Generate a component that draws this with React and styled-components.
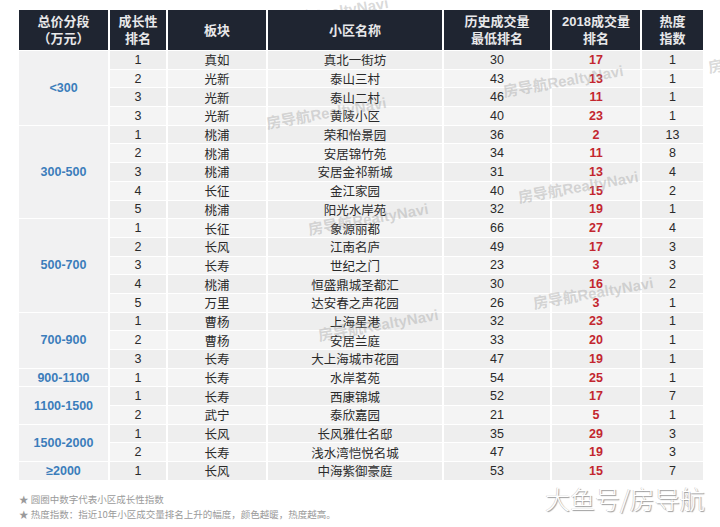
import React from 'react'
import styled, { createGlobalStyle } from 'styled-components'

const Global = createGlobalStyle`
  body {
    margin: 0;
    background: #fff;
    font-family: "Liberation Sans", "Noto Sans CJK SC", sans-serif;
  }
`

const Page = styled.div`
  position: relative;
  width: 720px;
  height: 527px;
  overflow: hidden;
  padding: 10px 0 0 19px;
  box-sizing: border-box;
`

const Grid = styled.div`
  display: grid;
  grid-template-columns: 89px 56px 98px 174px 106px 88px 61px;
  grid-template-rows: 40px;
  grid-auto-rows: 17.7px;
  column-gap: 2px;
  row-gap: 1px;
`

const Head = styled.div`
  position: relative;
  z-index: 2;
  background: #1f2531;
  color: #e8e8ea;
  font-weight: bold;
  font-size: 13px;
  line-height: 17px;
  display: flex;
  align-items: center;
  justify-content: center;
  text-align: center;
`

const Cell = styled.div`
  background: ${p => (p.$alt ? '#f4f4f4' : '#eeeeee')};
  font-size: 12.5px;
  display: flex;
  align-items: center;
  justify-content: center;
  color: ${p => (p.$hot ? '#c3262f' : '#2a2a2a')};
  font-weight: ${p => (p.$hot ? 'bold' : 'normal')};
`

const Group = styled.div`
  grid-row: span ${p => p.$span};
  background: #f1f1f2;
  color: #3b7dbb;
  font-weight: bold;
  font-size: 12.5px;
  display: flex;
  align-items: center;
  justify-content: center;
`

const Notes = styled.div`
  margin-top: 14px;
  display: flex;
  flex-direction: column;
  gap: 4px;
  color: #9a9a9a;
  font-size: 9.5px;
  line-height: 11px;
  font-family: "Noto Sans CJK SC", sans-serif;
`

const Mark = styled.div`
  position: absolute;
  z-index: 1;
  left: ${p => p.$x}px;
  top: ${p => p.$y}px;
  transform: rotate(-10deg);
  transform-origin: left center;
  color: rgba(150, 150, 150, 0.36);
  font-weight: bold;
  font-size: 15px;
  white-space: nowrap;
  pointer-events: none;
`

const Brand = styled.div`
  position: absolute;
  z-index: 3;
  left: 545px;
  top: 480px;
  font-family: "Noto Sans CJK SC", sans-serif;
  font-weight: 300;
  font-size: 25px;
  white-space: nowrap;
  color: #fff;
  text-shadow: 1px 1px 1px #9a9a9a, -0.5px -0.5px 0 #c8c8c8;
`

const groups = [
  { label: '<300', rows: [
    [1, '真如', '真北一街坊', 30, 17, 1],
    [2, '光新', '泰山三村', 43, 13, 1],
    [3, '光新', '泰山二村', 46, 11, 1],
    [3, '光新', '黄陵小区', 40, 23, 1],
  ] },
  { label: '300-500', rows: [
    [1, '桃浦', '荣和怡景园', 36, 2, 13],
    [2, '桃浦', '安居锦竹苑', 34, 11, 8],
    [3, '桃浦', '安居金祁新城', 31, 13, 4],
    [4, '长征', '金江家园', 40, 15, 2],
    [5, '桃浦', '阳光水岸苑', 32, 19, 1],
  ] },
  { label: '500-700', rows: [
    [1, '长征', '象源丽都', 66, 27, 4],
    [2, '长风', '江南名庐', 49, 17, 3],
    [3, '长寿', '世纪之门', 23, 3, 3],
    [4, '桃浦', '恒盛鼎城圣都汇', 30, 16, 2],
    [5, '万里', '达安春之声花园', 26, 3, 1],
  ] },
  { label: '700-900', rows: [
    [1, '曹杨', '上海星港', 32, 23, 1],
    [2, '曹杨', '安居兰庭', 33, 20, 1],
    [3, '长寿', '大上海城市花园', 47, 19, 1],
  ] },
  { label: '900-1100', rows: [
    [1, '长寿', '水岸茗苑', 54, 25, 1],
  ] },
  { label: '1100-1500', rows: [
    [1, '长寿', '西康锦城', 52, 17, 7],
    [2, '武宁', '泰欣嘉园', 21, 5, 1],
  ] },
  { label: '1500-2000', rows: [
    [1, '长风', '长风雅仕名邸', 35, 29, 3],
    [2, '长寿', '浅水湾恺悦名城', 47, 19, 3],
  ] },
  { label: '≥2000', rows: [
    [1, '长风', '中海紫御豪庭', 53, 15, 7],
  ] },
]

const heads = [
  ['总价分段', '（万元）'],
  ['成长性', '排名'],
  ['板块'],
  ['小区名称'],
  ['历史成交量', '最低排名'],
  ['2018成交量', '排名'],
  ['热度', '指数'],
]

// watermark spots
const marks = [
  [268, 12],
  [266, 112],
  [503, 80],
  [708, 56],
  [518, 186],
  [308, 218],
  [533, 292],
  [318, 324],
]

export default function App() {
  let n = 0
  return (
    <Page>
      <Global />
      <Grid>
        {heads.map((h, i) => (
          <Head key={i}>
            <div>{h.map((l, j) => <div key={j}>{l}</div>)}</div>
          </Head>
        ))}
        {groups.map(g => (
          <React.Fragment key={g.label}>
            <Group $span={g.rows.length} style={{ gridColumn: 1 }}>{g.label}</Group>
            {g.rows.map((r, i) => {
              n += 1
              const alt = n % 2 === 0
              return (
                <React.Fragment key={i}>
                  <Cell $alt={alt} style={{ gridColumn: 2 }}>{r[0]}</Cell>
                  <Cell $alt={alt}>{r[1]}</Cell>
                  <Cell $alt={alt}>{r[2]}</Cell>
                  <Cell $alt={alt}>{r[3]}</Cell>
                  <Cell $alt={alt} $hot>{r[4]}</Cell>
                  <Cell $alt={alt}>{r[5]}</Cell>
                </React.Fragment>
              )
            })}
          </React.Fragment>
        ))}
      </Grid>
      <Notes>
        <div>★ 圆圈中数字代表小区成长性指数</div>
        <div>★ 热度指数：指近10年小区成交量排名上升的幅度，颜色越暖，热度越高。</div>
      </Notes>
      {marks.map(([x, y], i) => (
        <Mark key={i} $x={x} $y={y}>房导航RealtyNavi</Mark>
      ))}
      <Brand>大鱼号/房导航</Brand>
    </Page>
  )
}
